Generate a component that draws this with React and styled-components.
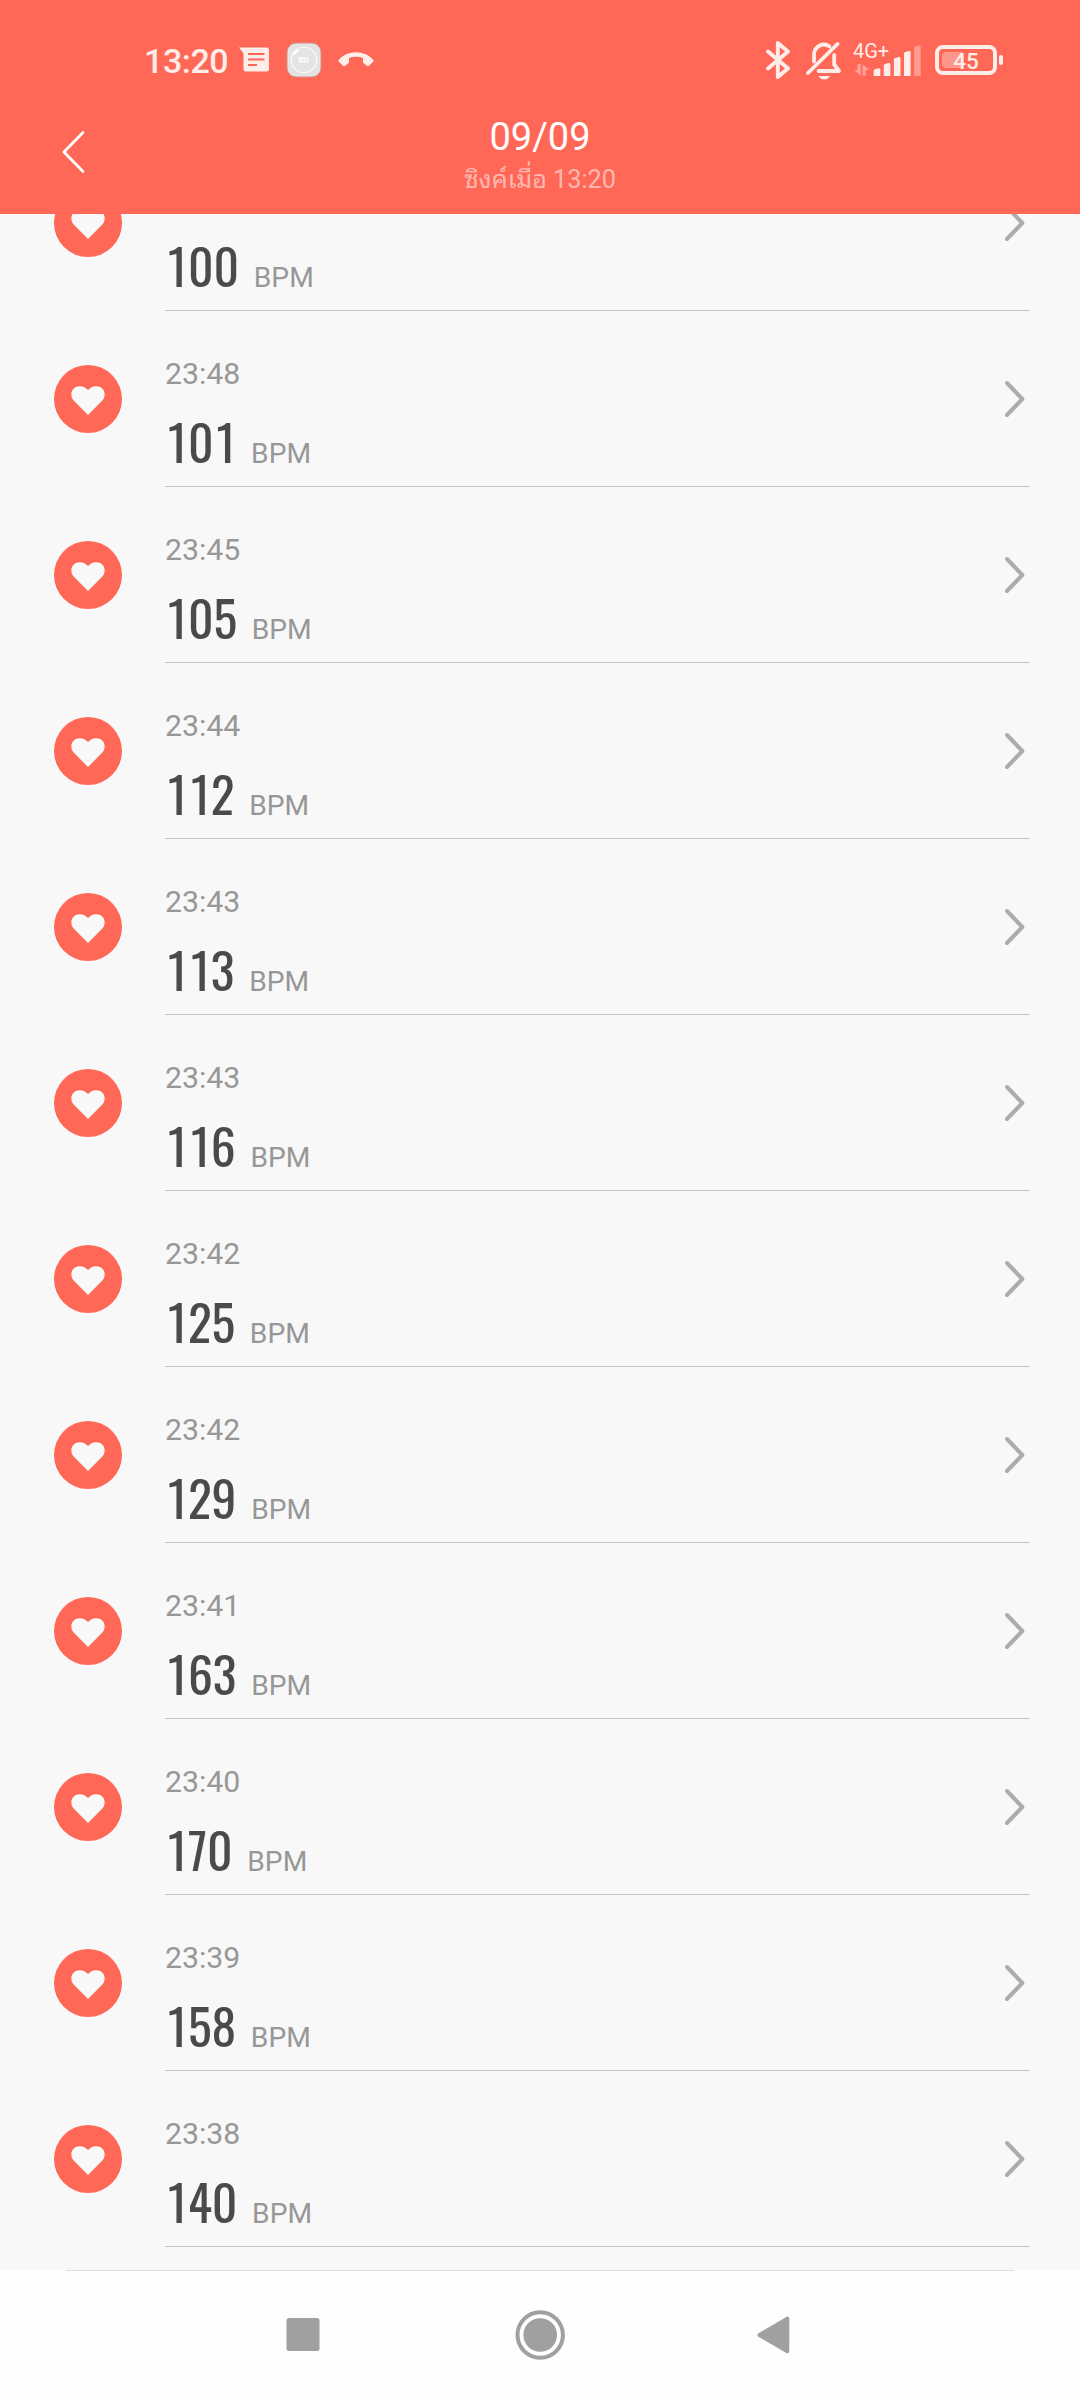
import React from 'react'
import styled, { createGlobalStyle } from 'styled-components'

const colors = {
    accent: '#ff6757',
    status: '#ffedea',
    background: '#f8f8f8',
    text: '#4a4a4a',
    textDim: '#979797',
    line: '#c4c4c4',
    chevron: '#acacac',
    nav: '#a0a0a0',
}

const records = [
    // scrolled half way under the header, only the value is visible
    { id: 1, time: '', bpm: 100 },
    { id: 2, time: '23:48', bpm: 101 },
    { id: 3, time: '23:45', bpm: 105 },
    { id: 4, time: '23:44', bpm: 112 },
    { id: 5, time: '23:43', bpm: 113 },
    { id: 6, time: '23:43', bpm: 116 },
    { id: 7, time: '23:42', bpm: 125 },
    { id: 8, time: '23:42', bpm: 129 },
    { id: 9, time: '23:41', bpm: 163 },
    { id: 10, time: '23:40', bpm: 170 },
    { id: 11, time: '23:39', bpm: 158 },
    { id: 12, time: '23:38', bpm: 140 },
]

const MessageIcon = () => (
    <svg width="30" height="26" viewBox="0 0 30 26">
        <path
            fill={colors.status}
            d="M0 .5H27.5Q30 .5 30 3V22Q30 24.5 27.5 24.5H7Q4.5 24.5 4.5 22V6.5Z"
        />
        <path stroke={colors.accent} strokeWidth="1.9" d="M9 7H25.5M9 12.5H25.5M9 18H18" />
    </svg>
)

const MiFitIcon = () => (
    <svg width="36" height="36" viewBox="0 0 36 36">
        <rect x="1" y="1" width="34" height="34" rx="9" fill="#e4e4e4" stroke="#d98d84" />
        <circle
            cx="18"
            cy="18"
            r="12.7"
            fill="none"
            stroke="#fafafa"
            strokeWidth="1.2"
            strokeDasharray="70 10"
            transform="rotate(-110 18 18)"
        />
        <path stroke="#fff" strokeWidth="3" strokeLinecap="round" d="M8 11.5L11.5 8" />
        <path
            fill="none"
            stroke="#fafafa"
            strokeWidth="1.8"
            d="M13.5 21V16H18.5V21M16 17.8V21M21.5 15V21"
        />
    </svg>
)

const CallIcon = () => (
    <svg width="36" height="16" viewBox="0 0 36 16">
        <path
            fill={colors.status}
            d="M0 8.8C9-2.500 27-2.500 36 8.800L30.800 14Q30 14.500 29.200 14L25 10.800V6C20.500 4.300 15.500 4.300 11 6V10.800L6.800 14Q6 14.500 5.200 14Z"
        />
    </svg>
)

const BluetoothIcon = () => (
    <svg width="25" height="38" viewBox="0 0 25 38">
        <path
            fill="none"
            stroke={colors.status}
            strokeWidth="3.9"
            strokeLinejoin="round"
            strokeLinecap="round"
            d="M2 10.5L22 27.5L11.8 36V2L22 10.5L2 27.5"
        />
    </svg>
)

const MutedIcon = () => (
    <svg width="36" height="40" viewBox="0 0 36 40">
        <g fill="none" stroke={colors.status} strokeWidth="3.8" strokeLinecap="round">
            <path d="M8 21.500V14.500A9.800 10 0 0 1 23.500 6.500" />
            <path d="M28.200 15V24.500L33 31H12.500" strokeLinejoin="round" />
            <path d="M2 33L31.500 4" />
        </g>
        <path fill={colors.status} d="M12.500 36H24Q22 39.500 18.200 39.500T12.500 36Z" />
    </svg>
)

const DataArrowsIcon = () => (
    <svg width="17" height="12" viewBox="0 0 17 12">
        <path
            fill={colors.status}
            opacity="0.45"
            d="M4.500 0H7.700V11.500L1 6H4.500ZM9.500 .5L16.500 6H12.700V11.500H9.500Z"
        />
    </svg>
)

const bars = [7.7, 13, 19, 25, 30.5]

const barPath = (x, height) => {
    const top = 31 - height
    return `M${x} 31V${top + 2.5}Q${x} ${top + 1.5} ${x + 1} ${top + 1}L${x + 5} ${top}Q${x + 6.6} ${top - 0.2} ${x + 6.6} ${top + 1.3}V31Z`
}

const SignalIcon = () => (
    <svg width="49" height="31" viewBox="0 0 49 31">
        {bars.map((height, i) => (
            <path
                key={height}
                fill={colors.status}
                opacity={i === 4 ? 0.4 : 1}
                d={barPath(0.7 + i * 10.1, height)}
            />
        ))}
    </svg>
)

const BackIcon = () => (
    <svg width="24" height="44" viewBox="0 0 24 44">
        <path
            fill="none"
            stroke="#fff"
            strokeWidth="2.8"
            strokeLinecap="round"
            strokeLinejoin="round"
            d="M21 2.5L2 22L21 41.5"
        />
    </svg>
)

const HeartIcon = () => (
    <svg width="68" height="68" viewBox="0 0 68 68">
        <circle cx="34" cy="34" r="34" fill={colors.accent} />
        <path
            fill={colors.background}
            d="M34 50L19.800 35.800Q17.300 33 17.300 29.500C17.300 24.500 21 21.200 25.800 21.200C29.300 21.200 32 22.500 34 25.300C36 22.500 38.700 21.200 42.200 21.200C47 21.200 50.700 24.500 50.700 29.500Q50.700 33 48.200 35.800Z"
        />
    </svg>
)

const ChevronIcon = () => (
    <svg width="20" height="38" viewBox="0 0 20 38">
        <path
            fill="none"
            stroke={colors.chevron}
            strokeWidth="4"
            strokeLinecap="round"
            strokeLinejoin="round"
            d="M2 3L17.3 19L2 35"
        />
    </svg>
)

const RecordItem = ({ time, bpm }) => (
    <Row>
        <RowIcon>
            <HeartIcon />
        </RowIcon>
        <RowBody>
            <div>
                <Time>{time}</Time>
                <Measure>
                    <Value>
                        {String(bpm)
                            .split('')
                            .map((digit, i) => (
                                <Digit key={i} $wide={digit === '1'}>
                                    {digit}
                                </Digit>
                            ))}
                    </Value>
                    <Unit>BPM</Unit>
                </Measure>
            </div>
            <ChevronIcon />
        </RowBody>
    </Row>
)

export default function App() {
    return (
        <Screen>
            <GlobalStyle />
            <Header>
                <StatusBar>
                    <StatusGroup>
                        <Clock>13:20</Clock>
                        <StatusIcons $gap={16.5}>
                            <MessageIcon />
                            <MiFitIcon />
                            <CallIcon />
                        </StatusIcons>
                    </StatusGroup>
                    <StatusGroup>
                        <StatusIcons $gap={15}>
                            <BluetoothIcon />
                            <MutedIcon />
                        </StatusIcons>
                        <Network>
                            <NetworkSide>
                                <NetworkType>4G+</NetworkType>
                                <DataArrowsIcon />
                            </NetworkSide>
                            <SignalIcon />
                        </Network>
                        <Battery>
                            <BatteryShell>
                                <BatteryLevel />
                                <BatteryText>45</BatteryText>
                            </BatteryShell>
                            <BatteryTip />
                        </Battery>
                    </StatusGroup>
                </StatusBar>
                <TitleBar>
                    <BackIcon />
                    <Titles>
                        <Title>09/09</Title>
                        <Subtitle>ซิงค์เมื่อ 13:20</Subtitle>
                    </Titles>
                </TitleBar>
            </Header>
            <List>
                {records.map((record) => (
                    <RecordItem key={record.id} {...record} />
                ))}
            </List>
            <NavBar>
                <NavButtons>
                    <svg width="60" height="60" viewBox="0 0 60 60">
                        <rect x="12.5" y="13" width="33" height="33" rx="2.5" fill={colors.nav} />
                    </svg>
                    <svg width="60" height="60" viewBox="0 0 60 60">
                        <circle
                            cx="30.2"
                            cy="30"
                            r="22.7"
                            fill="none"
                            stroke={colors.nav}
                            strokeWidth="4"
                        />
                        <circle cx="30.2" cy="30" r="16.8" fill={colors.nav} />
                    </svg>
                    <svg width="60" height="60" viewBox="0 0 60 60">
                        <path
                            fill={colors.nav}
                            stroke={colors.nav}
                            strokeWidth="4"
                            strokeLinejoin="round"
                            d="M13.5 30L41.3 13.7V46.3Z"
                        />
                    </svg>
                </NavButtons>
            </NavBar>
        </Screen>
    )
}

const GlobalStyle = createGlobalStyle`
    body {
        margin: 0;
        background: ${colors.background};
        font-family: Roboto, 'Noto Sans Thai Looped', 'Noto Sans', serif;
    }
    svg {
        display: block;
        flex: none;
    }
`

const Screen = styled.div`
    display: flex;
    flex-direction: column;
    width: 1080px;
    height: 2400px;
    overflow: hidden;
`

const Header = styled.header`
    flex: none;
    height: 214px;
    background: ${colors.accent};
`

const StatusBar = styled.div`
    display: flex;
    justify-content: space-between;
    box-sizing: border-box;
    height: 80px;
    padding: 40px 77px 0 144px;
`

const StatusGroup = styled.div`
    display: flex;
    align-items: center;
    height: 40px;
    color: ${colors.status};
`

const StatusIcons = styled.div`
    display: flex;
    align-items: center;
    gap: ${({ $gap }) => $gap}px;
`

const Clock = styled.span`
    width: 95px;
    padding-top: 2px;
    font-size: 34px;
    font-weight: 500;
    line-height: 40px;
    letter-spacing: -0.4px;
`

const Network = styled.div`
    display: flex;
    align-items: flex-end;
    height: 36px;
    margin: 0 0 4px 11px;
`

const NetworkSide = styled.div`
    width: 20px;
    height: 36px;
    white-space: nowrap;
`

const NetworkType = styled.div`
    height: 24px;
    font-size: 20px;
    line-height: 22px;
`

const Battery = styled.div`
    display: flex;
    align-items: center;
    margin-left: 13px;
`

const BatteryShell = styled.div`
    position: relative;
    display: flex;
    align-items: center;
    justify-content: center;
    box-sizing: border-box;
    width: 62px;
    height: 30px;
    border: 4px solid ${colors.status};
    border-radius: 8px;
`

const BatteryLevel = styled.div`
    position: absolute;
    top: 3px;
    left: 3px;
    width: 22px;
    height: 16px;
    border-radius: 3px;
    background: rgba(255, 237, 234, 0.35);
`

const BatteryText = styled.span`
    position: relative;
    padding-top: 2px;
    font-size: 22.5px;
    font-weight: 500;
    line-height: 24px;
`

const BatteryTip = styled.div`
    width: 4px;
    height: 10px;
    margin-left: 2px;
    border-radius: 2px;
    background: ${colors.status};
`

const TitleBar = styled.div`
    display: grid;
    grid-template-columns: 24px 1fr 24px;
    align-items: start;
    padding: 34px 62px 0;
    > svg {
        margin-top: 16px;
    }
`

const Titles = styled.div`
    text-align: center;
`

const Title = styled.h1`
    margin: 0;
    font-size: 38px;
    font-weight: 400;
    line-height: 46px;
    color: #fff;
`

const Subtitle = styled.div`
    margin-top: 3px;
    font-size: 25.2px;
    line-height: 34px;
    color: rgba(255, 255, 255, 0.55);
`

const List = styled.main`
    display: flex;
    flex: 1;
    flex-direction: column;
    justify-content: flex-end;
    min-height: 0;
    padding-bottom: 23px;
    overflow: hidden;
`

const Row = styled.div`
    display: flex;
    flex: none;
    height: 176px;
    padding: 0 50px 0 54px;
`

const RowIcon = styled.div`
    display: flex;
    align-items: center;
    width: 111px;
`

const RowBody = styled.div`
    display: flex;
    flex: 1;
    align-items: center;
    justify-content: space-between;
    box-sizing: border-box;
    padding-right: 5px;
    border-bottom: 1px solid ${colors.line};
    > div {
        align-self: flex-start;
        padding-top: 43px;
    }
`

const Time = styled.div`
    height: 40px;
    font-size: 30.25px;
    line-height: 40px;
    color: ${colors.textDim};
`

const Measure = styled.div`
    display: flex;
    align-items: baseline;
    height: 60px;
    margin-top: 17px;
    line-height: 60px;
`

const Value = styled.span`
    font-family: Oswald, 'Roboto Condensed', Roboto, sans-serif;
    font-size: 49.5px;
    color: ${colors.text};
`

// the figure 1 gets extra side bearings
const Digit = styled.span`
    padding: ${({ $wide }) => ($wide ? '0 1.2px 0 3px' : 0)};
`

const Unit = styled.span`
    margin-left: 14.7px;
    font-size: 28.2px;
    color: ${colors.textDim};
`

const NavBar = styled.footer`
    flex: none;
    height: 130px;
    background: #fefefe;
`

const NavButtons = styled.div`
    display: grid;
    grid-template-columns: repeat(3, 236px);
    justify-content: center;
    justify-items: center;
    margin: 0 66px;
    padding-top: 34px;
    border-top: 1px solid #e0e0e0;
`
